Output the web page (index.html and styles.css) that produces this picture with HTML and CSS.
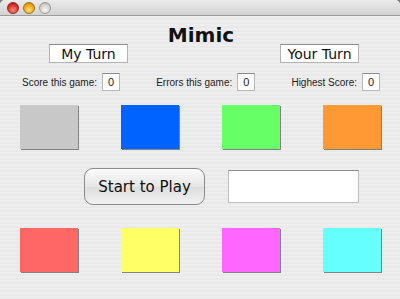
FILE: index.html
```html
<!DOCTYPE html>
<html lang="en">
<head>
    <meta charset="UTF-8">
    <meta name="viewport" content="width=device-width, initial-scale=1.0">
    <title>Mimic</title>
    <link rel="stylesheet" href="styles.css">
</head>
<body>

<div class="window">
    <div class="titlebar">
        <span class="light red"></span>
        <span class="light yellow"></span>
        <span class="light gray"></span>
    </div>

    <div class="content">
        <h1>Mimic</h1>

        <div class="turns">
            <div class="turn">My Turn</div>
            <div class="turn">Your Turn</div>
        </div>

        <div class="scores">
            <div class="score"><span>Score this game:</span><div class="num">0</div></div>
            <div class="score"><span>Errors this game:</span><div class="num">0</div></div>
            <div class="score"><span>Highest Score:</span><div class="num">0</div></div>
        </div>

        <div class="pads">
            <div class="pad c-gray"></div>
            <div class="pad c-blue"></div>
            <div class="pad c-green"></div>
            <div class="pad c-orange"></div>
        </div>

        <div class="controls">
            <button class="start">Start to Play</button>
            <div class="field"></div>
        </div>

        <div class="pads second">
            <div class="pad c-red"></div>
            <div class="pad c-yellow"></div>
            <div class="pad c-magenta"></div>
            <div class="pad c-cyan"></div>
        </div>
    </div>
</div>

</body>
</html>
```

FILE: styles.css
```css
body {
    margin: 0;
    padding: 0;
    background-color: #7a7a7a;
    font-family: 'DejaVu Sans', Verdana, sans-serif;
}

.window {
    width: 400px;
    height: 299px;
    overflow: hidden;
    border-radius: 5px 5px 0 0;
    background-color: #ececec;
    background-image: repeating-linear-gradient(to bottom, #eeeeee 0, #eeeeee 2px, #e9e9e9 2px, #e9e9e9 4px);
}

.titlebar {
    height: 15px;
    border-bottom: 1px solid #9c9c9c;
    background: linear-gradient(to bottom, #ebebeb, #d2d2d2);
    display: flex;
    align-items: center;
    gap: 4px;
    padding-left: 7px;
}

.light {
    width: 12px;
    height: 12px;
    border-radius: 50%;
    box-sizing: border-box;
}

.light.red {
    background: radial-gradient(circle at 50% 70%, #ff8a80, #d0201c 70%, #8a1410);
    border: 1px solid #8f2a25;
}

.light.yellow {
    background: radial-gradient(circle at 50% 70%, #ffe07a, #e59a0c 70%, #a06008);
    border: 1px solid #a86d16;
}

.light.gray {
    background: radial-gradient(circle at 50% 70%, #f6f6f6, #c9c9c9 70%, #a4a4a4);
    border: 1px solid #9a9a9a;
}

.content {
    display: flex;
    flex-direction: column;
}

h1 {
    margin: 11px 0 0 0;
    font-size: 20px;
    line-height: 17px;
    font-weight: bold;
    text-align: center;
    color: #111;
    padding-left: 2px;
}

.turns {
    display: flex;
    justify-content: space-between;
    padding: 0 41px 0 49px;
}

.turn {
    width: 79px;
    height: 19px;
    box-sizing: border-box;
    background-color: #fff;
    border: 1px solid #b4b4b4;
    border-top-color: #8c8c8c;
    font-size: 14px;
    line-height: 18px;
    text-align: center;
    color: #111;
}

.scores {
    display: flex;
    justify-content: space-between;
    padding: 0 20px 0 22px;
    margin-top: 10px;
}

.score {
    display: flex;
    align-items: center;
    gap: 5px;
    font-family: 'Liberation Sans', Arial, sans-serif;
    font-size: 10px;
    color: #222;
}

.num {
    width: 18px;
    height: 18px;
    box-sizing: border-box;
    background-color: #fff;
    border: 1px solid #b8b8b8;
    border-top-color: #8c8c8c;
    font-size: 11px;
    line-height: 16px;
    text-align: center;
}

.pads {
    display: grid;
    grid-template-columns: repeat(4, 58px);
    column-gap: 43px;
    padding-left: 20px;
    margin-top: 14px;
}

.pads.second {
    margin-top: 23px;
}

.pad {
    height: 44px;
    box-shadow: 1px 1px 0 rgba(0, 0, 0, 0.45);
}

.c-gray { background-color: #c8c8c8; }
.c-blue { background-color: #0062ff; }
.c-green { background-color: #66ff66; }
.c-orange { background-color: #ff9933; }
.c-red { background-color: #ff6666; }
.c-yellow { background-color: #ffff66; }
.c-magenta { background-color: #ff66ff; }
.c-cyan { background-color: #66ffff; }

.controls {
    display: flex;
    align-items: center;
    gap: 23px;
    padding-left: 84px;
    margin-top: 19px;
}

.start {
    width: 121px;
    height: 37px;
    border: 1px solid #8a8a8a;
    border-radius: 9px;
    background: linear-gradient(to bottom, #fbfbfb, #e6e6e6 50%, #dcdcdc 51%, #f2f2f2);
    font-family: 'DejaVu Sans', Verdana, sans-serif;
    font-size: 15px;
    color: #111;
    padding: 0;
}

.field {
    width: 131px;
    height: 33px;
    box-sizing: border-box;
    background-color: #fff;
    border: 1px solid #c0c0c0;
    border-top-color: #8e8e8e;
}
```
